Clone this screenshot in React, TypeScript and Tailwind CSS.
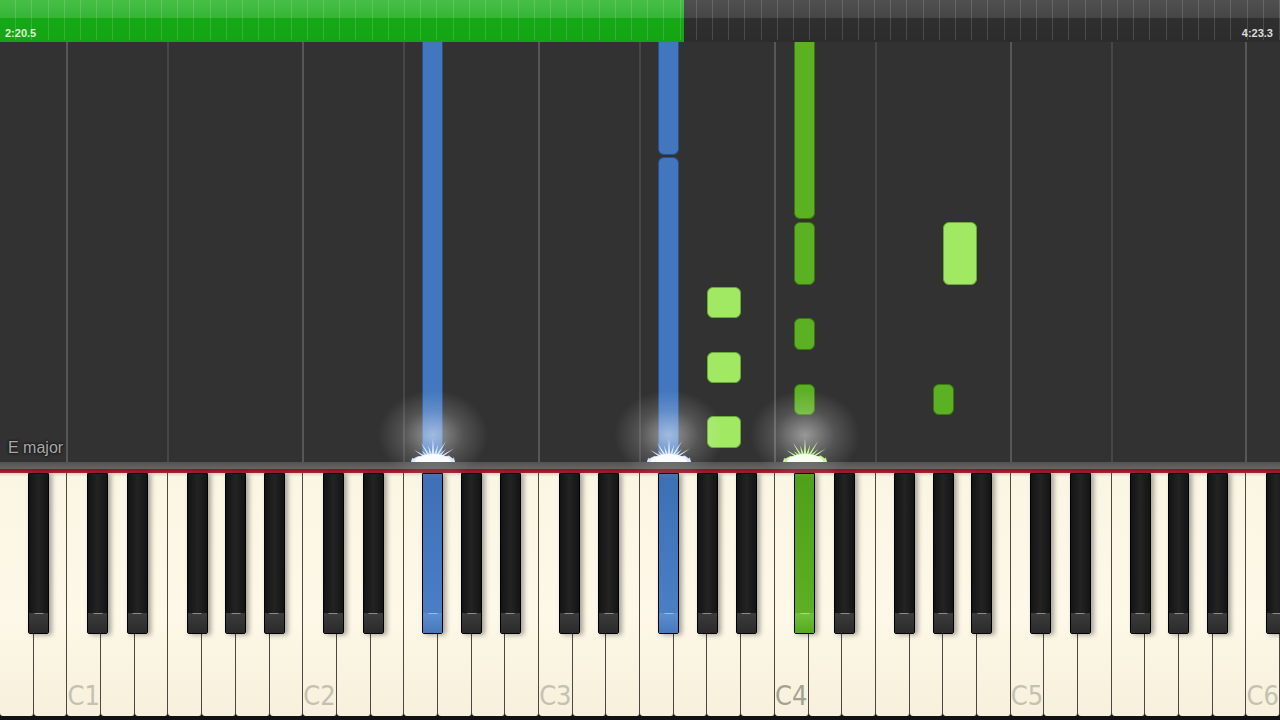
import React from 'react';

// 38 white keys, A0 .. C6
const KEY_W = 1280 / 38;
const NOTE_AREA_H = 420;

type Hand = 'blue' | 'green' | 'lime';

const NOTE_CLS: Record<Hand, string> = {
  blue: 'bg-[#4276be] border-[#2b4f86]',
  green: 'bg-[#5cb023] border-[#3b7812]',
  lime: 'bg-[#a1e863] border-[#6aa83a]',
};

// black key offsets from the white key boundary on their right side
const BLACK_OFFSETS: [number, number][] = [
  [1, -3.5], // C#
  [2, 2.5], // D#
  [4, -5], // F#
  [5, 0], // G#
  [6, 5], // A#
];

type BlackKey = { id: string; left: number; pressed?: Hand };

const pressedBlack: Record<string, Hand> = { 'F#2': 'blue', 'F#3': 'blue', 'C#4': 'green' };

const blackKeys: BlackKey[] = (() => {
  const keys: BlackKey[] = [{ id: 'A#0', left: 1 * KEY_W + 5 - 10.5 }];
  const names = ['C#', 'D#', 'F#', 'G#', 'A#'];
  for (let o = 0; o < 6; o++) {
    const base = 2 + 7 * o;
    BLACK_OFFSETS.forEach(([b, off], n) => {
      if (o === 5 && n > 0) return;
      const id = `${names[n]}${o + 1}`;
      keys.push({ id, left: (base + b) * KEY_W + off - 10.5, pressed: pressedBlack[id] });
    });
  }
  return keys;
})();

const blackLeft = (id: string) => blackKeys.find((k) => k.id === id)!.left;

type Note = { left: number; width: number; top: number; bottom: number; hand: Hand };

const notes: Note[] = [
  // left hand
  { left: blackLeft('F#2'), width: 21, top: 0, bottom: 420, hand: 'blue' },
  { left: blackLeft('F#3'), width: 21, top: 0, bottom: 113, hand: 'blue' },
  { left: blackLeft('F#3'), width: 21, top: 115, bottom: 420, hand: 'blue' },
  // right hand
  { left: blackLeft('C#4'), width: 21, top: 0, bottom: 177, hand: 'green' },
  { left: blackLeft('C#4'), width: 21, top: 180, bottom: 243, hand: 'green' },
  { left: blackLeft('C#4'), width: 21, top: 276, bottom: 308, hand: 'green' },
  { left: blackLeft('C#4'), width: 21, top: 342, bottom: 373, hand: 'green' },
  { left: blackLeft('G#4'), width: 21, top: 342, bottom: 373, hand: 'green' },
  { left: 21 * KEY_W, width: 34, top: 245, bottom: 276, hand: 'lime' },
  { left: 21 * KEY_W, width: 34, top: 310, bottom: 341, hand: 'lime' },
  { left: 21 * KEY_W, width: 34, top: 374, bottom: 406, hand: 'lime' },
  { left: 28 * KEY_W, width: 34, top: 180, bottom: 243, hand: 'lime' },
];

// octave guides at every C and F
const guides = [2, 5, 9, 12, 16, 19, 23, 26, 30, 33, 37].map((i) => ({ x: i * KEY_W, isC: (i - 2) % 7 === 0 }));

const SPIKES = [5, 9, 7, 13, 9, 16, 12, 19, 13, 18, 11, 15, 8, 11, 5];

function Burst({ color }: { color: string }) {
  const cx = 26;
  const cy = 24;
  const n = SPIKES.length;
  const pts: string[] = [];
  for (let i = 0; i <= n * 2; i++) {
    const a = Math.PI + (i / (n * 2)) * Math.PI;
    const r = i % 2 ? SPIKES[(i - 1) / 2] + 5 : 8;
    const rx = Math.abs(Math.cos(a)) > 0.9 ? 22 : r * 1.4;
    pts.push(`${(cx + Math.cos(a) * rx).toFixed(1)},${(cy + Math.sin(a) * r).toFixed(1)}`);
  }
  return (
    <svg width="52" height="24" viewBox="0 0 52 24" className="blur-[0.5px]">
      <polygon points={pts.join(' ')} fill={color} />
      <ellipse cx="26" cy="24" rx="18" ry="8" fill="#ffffff" opacity="0.85" />
    </svg>
  );
}

function Glow({ cx, color }: { cx: number; color: string }) {
  return (
    <div className="absolute bottom-0 flex w-[110px] -translate-x-1/2 justify-center" style={{ left: cx }}>
      <div className="absolute bottom-[-18px] h-[90px] w-[110px] rounded-full bg-[radial-gradient(closest-side,rgba(255,255,255,0.5),rgba(255,255,255,0.16)_55%,transparent)]" />
      <div className="relative">
        <Burst color={color} />
      </div>
    </div>
  );
}

function TopBar() {
  return (
    <div className="relative flex h-[42px] shrink-0">
      <div className="w-[684px] bg-[linear-gradient(#47bf47,#36b536_42%,#17a817_44%,#14a514)]" />
      <div className="flex-1 bg-[linear-gradient(#505050,#464646_42%,#2f2f2f_44%,#2c2c2c)]" />
      <div className="absolute inset-x-0 top-0 flex h-[40px]">
        {Array.from({ length: 79 }, (_, i) => (
          <div key={i} className="flex-1 border-r border-white/[0.14]" />
        ))}
      </div>
      <span className="absolute bottom-[3px] left-[5px] text-[11px] font-bold leading-none text-[#d9f2d2] [font-family:'Liberation_Sans',sans-serif]">
        2:20.5
      </span>
      <span className="absolute bottom-[3px] right-[7px] text-[11px] font-bold leading-none text-[#dcdcdc] [font-family:'Liberation_Sans',sans-serif]">
        4:23.3
      </span>
    </div>
  );
}

function NoteArea() {
  return (
    <div className="relative z-10 h-[420px] shrink-0 bg-[#323232]">
      {guides.map((g) => (
        <div
          key={g.x}
          className={`absolute inset-y-0 w-[2px] ${g.isC ? 'bg-[#575757]' : 'bg-[#474747]'}`}
          style={{ left: g.x - 1 }}
        />
      ))}
      {notes.map((n, i) => (
        <div
          key={i}
          className={`absolute border rounded-[6px] ${NOTE_CLS[n.hand]} ${n.top === 0 ? 'rounded-t-none border-t-0' : ''} ${
            n.bottom === NOTE_AREA_H ? 'rounded-b-none border-b-0' : ''
          }`}
          style={{ left: n.left, width: n.width, top: n.top, height: n.bottom - n.top }}
        />
      ))}
      <Glow cx={blackLeft('F#2') + 10.5} color="#d9e8ff" />
      <Glow cx={blackLeft('F#3') + 10.5} color="#d9e8ff" />
      <Glow cx={blackLeft('C#4') + 10.5} color="#c6f59a" />
      <span className="absolute bottom-[6px] left-[8px] text-[16px] leading-none text-[#a9a9a9] [text-shadow:0_0_3px_#111,0_0_2px_#111] [font-family:'Liberation_Sans',sans-serif]">
        E major
      </span>
    </div>
  );
}

const PRESSED_KEY: Record<Hand, { body: string; lip: string }> = {
  blue: { body: 'bg-[linear-gradient(#3d6fb5,#4a7fc5)]', lip: 'bg-[linear-gradient(#5c8fd2,#4677bb)]' },
  green: { body: 'bg-[linear-gradient(#4f9f1a,#5cb022)]', lip: 'bg-[linear-gradient(#6fc33a,#58a81f)]' },
  lime: { body: 'bg-[#a1e863]', lip: 'bg-[#b5f07f]' },
};

function Keyboard() {
  const labels: Record<number, string> = { 2: 'C1', 9: 'C2', 16: 'C3', 23: 'C4', 30: 'C5', 37: 'C6' };
  return (
    <div className="relative h-[247px] shrink-0 bg-[#121212]">
      <div className="flex h-[243px]">
        {Array.from({ length: 38 }, (_, i) => (
          <div
            key={i}
            className="flex flex-1 items-end justify-center rounded-b-[3px] border-r border-[#4b4841] bg-[linear-gradient(#e6d2c8,#fbf6e4_4px,#fdf8e7_60%,#f6f0dc)] pb-[7px]"
          >
            {labels[i] && (
              <span
                className={`text-[27px] leading-none [font-family:'Liberation_Sans_Narrow','DejaVu_Sans_Condensed',sans-serif] ${
                  i === 23 ? 'text-[#a3a095]' : 'text-[#c5c1b2]'
                }`}
              >
                {labels[i]}
              </span>
            )}
          </div>
        ))}
      </div>
      {blackKeys.map((k) => {
        const p = k.pressed ? PRESSED_KEY[k.pressed] : null;
        return (
          <div
            key={k.id}
            className="absolute top-0 flex h-[161px] w-[21px] flex-col rounded-b-[2px] border border-black shadow-[3px_1px_5px_rgba(0,0,0,0.35)]"
            style={{ left: k.left }}
          >
            <div
              className={`flex-1 ${
                p ? p.body : 'bg-[linear-gradient(90deg,#141414,#232323_50%,#141414),linear-gradient(#0c0c0c,#262626)]'
              }`}
            />
            <div className={`relative h-[20px] ${p ? p.lip : 'bg-[linear-gradient(#3c3c3c,#2a2a2a)]'}`}>
              <div className="absolute left-1/2 top-0 h-px w-[9px] -translate-x-1/2 bg-white/40" />
            </div>
          </div>
        );
      })}
    </div>
  );
}

export default function App() {
  return (
    <div className="flex h-[720px] w-[1280px] flex-col overflow-hidden bg-[#323232]">
      <TopBar />
      <NoteArea />
      <div className="h-[7px] shrink-0 bg-[linear-gradient(#525252,#666666)]" />
      <div className="h-[4px] shrink-0 bg-[linear-gradient(#8c1222,#a82434)]" />
      <Keyboard />
    </div>
  );
}
